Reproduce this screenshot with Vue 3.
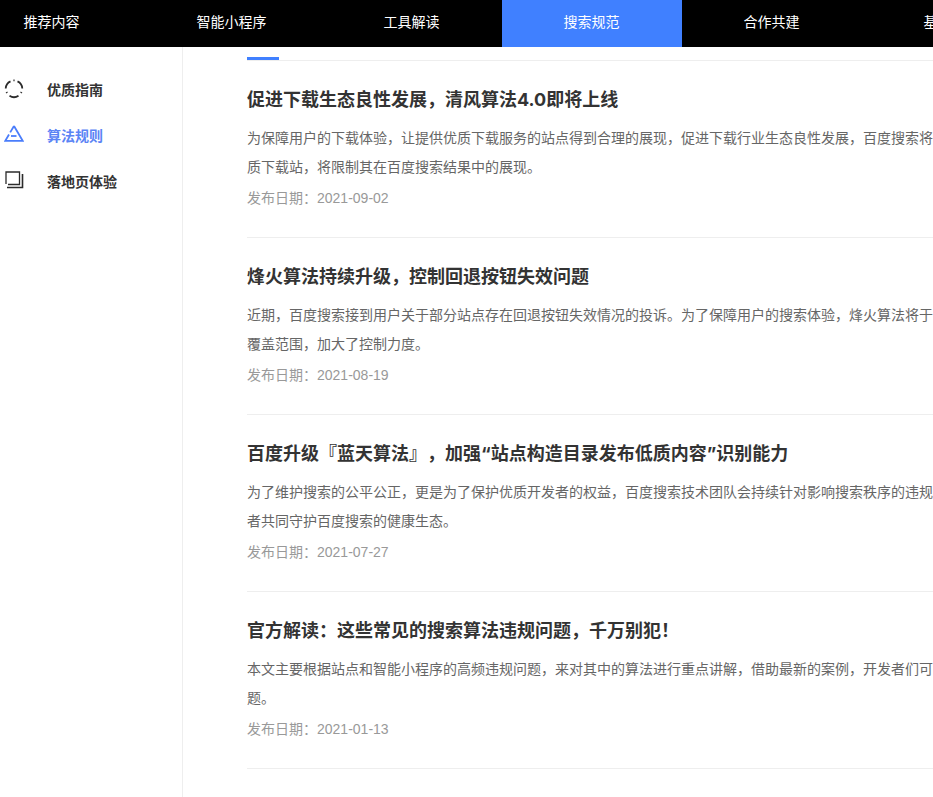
<script setup>
import {reactive} from 'vue'

const data = reactive({
  nav: ["推荐内容", "智能小程序", "工具解读", "搜索规范", "合作共建", "基础知识"],
  activeNav: "搜索规范",
  menu: [
    {name: "优质指南", icon: "circle"},
    {name: "算法规则", icon: "triangle"},
    {name: "落地页体验", icon: "square"}
  ],
  activeMenu: "算法规则",
  articles: [
    {
      title: "促进下载生态良性发展，清风算法4.0即将上线",
      lines: [
        "为保障用户的下载体验，让提供优质下载服务的站点得到合理的展现，促进下载行业生态良性发展，百度搜索将",
        "质下载站，将限制其在百度搜索结果中的展现。"
      ],
      date: "2021-09-02"
    },
    {
      title: "烽火算法持续升级，控制回退按钮失效问题",
      lines: [
        "近期，百度搜索接到用户关于部分站点存在回退按钮失效情况的投诉。为了保障用户的搜索体验，烽火算法将于",
        "覆盖范围，加大了控制力度。"
      ],
      date: "2021-08-19"
    },
    {
      title: "百度升级『蓝天算法』，加强“站点构造目录发布低质内容”识别能力",
      lines: [
        "为了维护搜索的公平公正，更是为了保护优质开发者的权益，百度搜索技术团队会持续针对影响搜索秩序的违规",
        "者共同守护百度搜索的健康生态。"
      ],
      date: "2021-07-27"
    },
    {
      title: "官方解读：这些常见的搜索算法违规问题，千万别犯！",
      lines: [
        "本文主要根据站点和智能小程序的高频违规问题，来对其中的算法进行重点讲解，借助最新的案例，开发者们可",
        "题。"
      ],
      date: "2021-01-13"
    }
  ]
})
</script>

<template>
  <div class="page">
    <nav class="top-nav">
      <a
        v-for="item in data.nav"
        :key="item"
        class="nav-item"
        :class="{active: item === data.activeNav}"
      >{{ item }}</a>
    </nav>
    <div class="body">
      <aside class="side">
        <a
          v-for="item in data.menu"
          :key="item.name"
          class="side-item"
          :class="{active: item.name === data.activeMenu}"
        >
          <svg class="side-icon" width="20" height="20" viewBox="0 0 20 20" fill="none" stroke="currentColor" stroke-width="1.8">
            <template v-if="item.icon === 'circle'">
              <path d="M1.7 9.5A8.3 8.3 0 0 1 6.5 2.4" />
              <path d="M13.5 2.4A8.3 8.3 0 0 1 18.3 9.5" />
              <path d="M9.4 1.3h1.2" />
              <path d="M2.5 13l.5 1" />
              <path d="M17.5 13l-.5 1" />
              <path d="M5.5 16.8A8.3 8.3 0 0 0 14.5 16.8" />
            </template>
            <template v-else-if="item.icon === 'triangle'">
              <path d="M10 1L18.7 15.8H1.3L5 9.5" />
              <path d="M6.2 7.4L10 1" />
              <path d="M7 11h5.5" />
            </template>
            <template v-else>
              <path d="M2 13V1h13.5v12.5H4" stroke-width="1.3" />
              <path d="M3 16.5h15.5V3" stroke-width="1.6" />
            </template>
          </svg>
          <span>{{ item.name }}</span>
        </a>
      </aside>
      <main class="content">
        <div class="tab-line"><i class="tab-mark"></i></div>
        <article v-for="item in data.articles" :key="item.date" class="article">
          <h3 class="title">{{ item.title }}</h3>
          <p v-for="line in item.lines" :key="line" class="text">{{ line }}</p>
          <div class="date">发布日期：{{ item.date }}</div>
        </article>
      </main>
    </div>
  </div>
</template>

<style scoped>
.page {
  width: 933px;
  height: 797px;
  overflow: hidden;
  font-family: "Liberation Sans", "Noto Sans CJK SC", sans-serif;
  text-spacing-trim: space-all;
  background: #fff;
}

.top-nav {
  display: flex;
  height: 47px;
  margin-left: -38px;
  background: #000;
}

.nav-item {
  flex: none;
  box-sizing: border-box;
  width: 180px;
  padding-right: 1px;
  line-height: 45px;
  text-align: center;
  font-size: 14px;
  color: #fff;
}

.nav-item.active {
  background: #4080ff;
}

.body {
  display: flex;
  height: 750px;
}

.side {
  flex: none;
  box-sizing: border-box;
  width: 183px;
  padding-top: 19px;
  border-right: 1px solid #eeeeee;
}

.side-item {
  display: flex;
  align-items: center;
  height: 46px;
  font-size: 14px;
  font-weight: 700;
  color: #333;
}

.side-item.active {
  color: #5b84f5;
}

.side-icon {
  flex: none;
  margin: 0 23px 0 4px;
  color: #2b2b2b;
}

.side-item.active .side-icon {
  color: #4a7dfb;
}

.content {
  flex: 1;
  min-width: 0;
  padding: 10px 0 0 64px;
}

.tab-line {
  height: 3px;
  border-bottom: 1px solid #eeeeee;
}

.tab-mark {
  display: block;
  width: 32px;
  height: 3px;
  background: #4080ff;
}

.article {
  box-sizing: border-box;
  height: 177px;
  padding-top: 26px;
  border-bottom: 1px solid #eeeeee;
}

.title {
  margin: 0 0 11px;
  font-family: Inter, "Noto Sans CJK SC", sans-serif;
  font-size: 18px;
  line-height: 26px;
  font-weight: 700;
  color: #333;
  white-space: nowrap;
}

.text {
  margin: 0;
  font-size: 14px;
  line-height: 29px;
  color: #666;
  white-space: nowrap;
}

.date {
  margin-top: 2px;
  font-size: 14px;
  line-height: 29px;
  color: #999;
}
</style>
